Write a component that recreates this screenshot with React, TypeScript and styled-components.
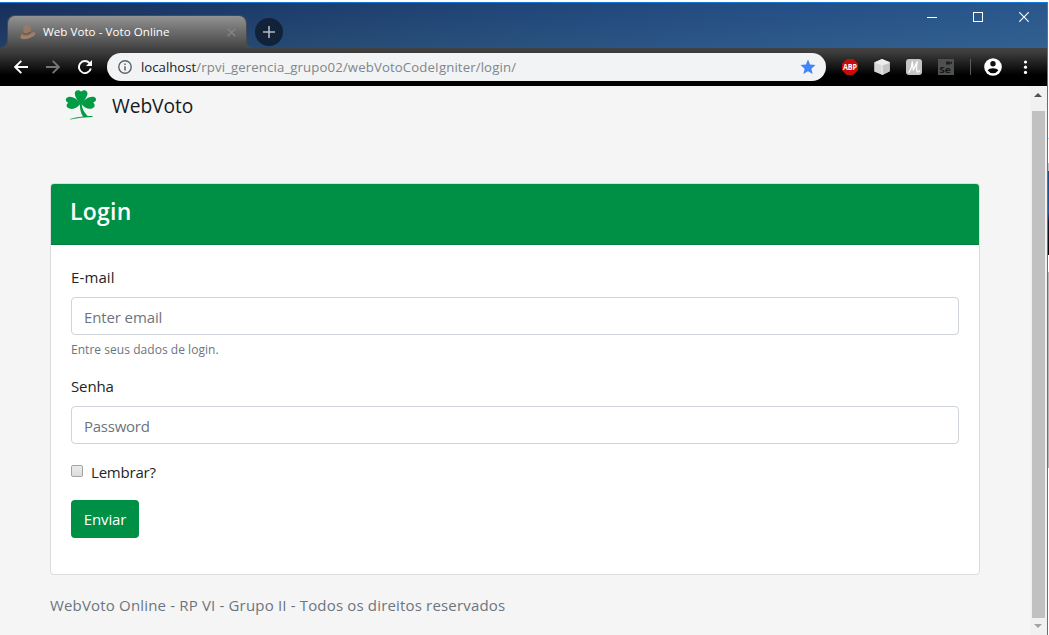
import React from "react";
import styled, { createGlobalStyle } from "styled-components";

const GREEN = "#009045";

const GlobalStyle = createGlobalStyle`
  * { box-sizing: border-box; }
  html, body { margin: 0; padding: 0; overflow: hidden; }
  body {
    font-family: "Open Sans", "Noto Sans", sans-serif;
    font-size: 15px;
    color: #212529;
    background: #fff;
  }
`;

const Desktop = styled.div`
  display: grid;
  grid-template-columns: 1047px 1px 1px;
  width: 1049px;
  height: 635px;
  padding-top: 2px;
  overflow: hidden;
`;

const BrowserWindow = styled.div`
  display: flex;
  flex-direction: column;
  min-width: 0;
  border-top: 1px solid #1478d4;
`;

const WindowEdge = styled.div`
  background: #1b83d8;
`;

const BehindWindow = styled.div`
  background: linear-gradient(
    #fff 0 136px, #b8dcf6 136px 137px, #fff 137px 161px, #b9c4cd 161px 169px,
    #1d4e86 169px, #1d5a9c 210px, #0c1c30 220px, #050708 253px,
    #fff 253px 270px, #b5b5b5 270px 466px, #fff 466px
  );
`;

const TitleBar = styled.div`
  display: flex;
  align-items: flex-end;
  height: 45px;
  padding-left: 7px;
  background:
    linear-gradient(180deg, rgba(0, 0, 0, 0.04), rgba(80, 130, 130, 0.18)),
    linear-gradient(90deg, #17305f 0%, #1f4274 35%, #25508a 72%, #2b5a92 100%);
`;

const Tab = styled.div`
  position: relative;
  display: flex;
  align-items: center;
  width: 240px;
  height: 33px;
  padding: 0 10px 0 12px;
  border: 1px solid #454950;
  border-bottom: 0;
  border-radius: 8px 8px 0 0;
  background: linear-gradient(#929292, #444);
  &::before, &::after {
    content: "";
    position: absolute;
    bottom: 0;
    width: 7px;
    height: 7px;
  }
  &::before {
    left: -8px;
    background: radial-gradient(circle at 0 0, transparent 6.5px, #484848 7px);
  }
  &::after {
    right: -8px;
    background: radial-gradient(circle at 100% 0, transparent 6.5px, #484848 7px);
  }
`;

const TabTitle = styled.span`
  flex: 1;
  margin-left: 7px;
  font-size: 11.6px;
  letter-spacing: 0.04px;
  line-height: 20px;
  color: #fff;
  white-space: nowrap;
`;

const NewTab = styled.div`
  display: grid;
  place-items: center;
  width: 28px;
  height: 28px;
  margin: 0 0 2px 8px;
  border-radius: 50%;
  background: #122238;
`;

const WindowControls = styled.div`
  display: flex;
  align-self: flex-start;
  margin-left: auto;
`;

const WindowControl = styled.div`
  display: grid;
  place-items: center;
  width: 46px;
  height: 28px;
`;

const Toolbar = styled.div`
  display: flex;
  align-items: center;
  flex: none;
  height: 38px;
  padding-left: 11px;
  background: linear-gradient(#424242, #3d3d3d 4px, #000 27px);
`;

const NavIcon = styled.span`
  display: grid;
  place-items: center;
  width: 20px;
  height: 20px;
  margin-right: 12px;
`;

const AddressBar = styled.div`
  display: flex;
  align-items: center;
  width: 719px;
  height: 28px;
  padding: 0 10px 0 11px;
  border-radius: 14px;
  background: #f1f3f4;
`;

const Url = styled.span`
  flex: 1;
  margin-left: 9px;
  font-size: 13.2px;
  letter-spacing: 0.125px;
  line-height: 20px;
  color: #80868b;
  white-space: nowrap;
`;

const UrlHost = styled.span`
  letter-spacing: 0;
  color: #202124;
`;

const Extensions = styled.div`
  display: flex;
  align-items: center;
  gap: 16px;
  margin-left: 16px;
`;

const ToolbarDivider = styled.div`
  width: 1px;
  height: 16px;
  margin: 0 13px 0 16px;
  background: #5c5c5c;
`;

const Viewport = styled.div`
  display: grid;
  grid-template-columns: 1030px 17px;
  flex: 1;
  min-height: 0;
  background: #f5f5f5;
`;

const Page = styled.main`
  padding: 0 50px;
`;

const Brand = styled.header`
  display: flex;
  align-items: center;
  height: 97px;
  padding: 0 0 59px 15px;
`;

const BrandName = styled.span`
  margin: 2px 0 0 15px;
  font-size: 19.2px;
  letter-spacing: -0.05px;
  line-height: 30px;
  color: #17191b;
`;

const Card = styled.section`
  height: 392px;
  border: 1px solid #dcdcdc;
  border-radius: 4px;
  background: #fff;
  overflow: hidden;
`;

const CardHeader = styled.div`
  height: 61px;
  padding: 12px 19px;
  border-bottom: 1px solid #007e3c;
  background: ${GREEN};
`;

const CardTitle = styled.h1`
  margin: 0;
  font-size: 23px;
  font-weight: 600;
  letter-spacing: 0.25px;
  line-height: 30px;
  color: #fff;
`;

const Form = styled.div`
  padding: 20px;
`;

const Field = styled.div`
  margin-bottom: 16px;
`;

const Label = styled.label<{ $spacing?: string }>`
  display: block;
  margin-bottom: 8px;
  line-height: 24px;
  letter-spacing: ${(p) => p.$spacing ?? "0"};
`;

const Input = styled.input<{ $spacing: string }>`
  display: block;
  width: 100%;
  height: 38px;
  padding: 2px 12px 0;
  border: 1px solid #ced4da;
  border-radius: 4px;
  background: #fff;
  font: inherit;
  letter-spacing: ${(p) => p.$spacing};
  color: #495057;
  &::placeholder { color: #6c757d; opacity: 1; }
`;

const Hint = styled.small`
  display: block;
  margin-top: 6px;
  margin-bottom: -1px;
  font-size: 12px;
  letter-spacing: 0.04px;
  line-height: 18px;
  color: #6c757d;
`;

const CheckRow = styled.div`
  display: flex;
  align-items: center;
  height: 24px;
  margin-bottom: 16px;
  letter-spacing: -0.2px;
`;

const CheckBox = styled.span`
  width: 12px;
  height: 12px;
  margin: 0 8px 2px 0;
  border: 1px solid #a3a3a3;
  border-radius: 2px;
  background: linear-gradient(#ebebeb, #dcdcdc);
`;

const Submit = styled.button`
  display: block;
  width: 68px;
  height: 38px;
  padding: 0;
  border: 0;
  border-radius: 4px;
  background: ${GREEN};
  font: inherit;
  letter-spacing: -0.1px;
  color: #fff;
`;

const Footer = styled.footer`
  margin-top: 18px;
  letter-spacing: 0.17px;
  line-height: 24px;
  color: #6c757d;
  white-space: nowrap;
`;

const Scrollbar = styled.div`
  display: flex;
  flex-direction: column;
  align-items: center;
  padding-right: 1px;
  background: #f1f1f1;
`;

const ScrollArrow = styled.div<{ $height: number; $drop: number }>`
  display: flex;
  justify-content: center;
  align-items: flex-start;
  width: 16px;
  height: ${(p) => p.$height}px;
  padding-top: ${(p) => p.$drop}px;
`;

const ScrollThumb = styled.div`
  width: 13px;
  flex: 1;
  background: #c1c1c1;
`;

const HatIcon = () => (
  <svg width="16" height="16" viewBox="0 0 16 16">
    <path d="M3.6 1.2Q5.4-.4 7 .8L9.2.7Q10.5.8 10.6 2.5L11.2 8Q14 7.4 15.4 9Q16 11 12 13Q7 16 2.2 15.2Q-.3 14.4 .5 12Q1 10 3.4 9.2Z" fill="#947a66" />
    <path d="M3.3 8.6Q6.5 10.8 11.1 7.3L11.3 8.7Q7 12 2.9 10.2Z" fill="#6c5546" />
    <path d="M1 12.8Q7 15 14.8 10" fill="none" stroke="#a98e75" strokeWidth=".9" />
  </svg>
);

const Shamrock = () => (
  <svg width="32" height="32" viewBox="0 0 32 32">
    <g fill="#009b45">
      <path d="M15.9 15.5C12.4 11.5 9.8 8 9.8 4.6C9.8 1 13.7.1 16 2.7C18.4 0 22.7 1 22.5 4.6C22.3 8 19.4 11.3 15.9 15.5Z" />
      <path d="M15.8 14.6C12.5 19 8.2 20.8 4.5 19.6C1 18.5.8 15.6 3.3 13.7C-.1 12.5.1 8.6 3.5 7.9C7.4 7.1 12 9.8 15.8 14.6Z" />
      <path d="M15.9 14.6C19.2 19 23.6 20.8 27.2 19.4C30.4 18.3 30.3 15.5 28 13.6C32 12.6 32 8.7 28.6 7.8C24.7 6.9 19.8 9.8 15.9 14.6Z" />
      <path d="M14.9 14.5H16.6C17 19.5 18.8 23.2 22.6 26.9L27.8 27L27.3 28.1Q15 28.2 5 30.5L5 30Q10.5 28.1 18 27.4C15.6 24 14.8 19.5 14.9 14.5Z" />
    </g>
  </svg>
);

const AdblockIcon = () => (
  <svg width="16" height="16" viewBox="0 0 16 16">
    <path d="M4.8 0H11.2L16 4.8V11.2L11.2 16H4.8L0 11.2V4.8Z" fill="#c70d0a" />
    <text x="1" y="11" textLength="14" lengthAdjust="spacingAndGlyphs" fontFamily="Open Sans, sans-serif" fontSize="8.2" fontWeight="700" fill="#fff">ABP</text>
  </svg>
);

const CubeIcon = () => (
  <svg width="16" height="16" viewBox="0 0 16 16">
    <path d="M8 0L15.7 3.2V12.2L8.4 16L.2 12.6V3.4Z" fill="#d6d6d6" />
    <path d="M8 0L15.7 3.2L7.6 6L.2 3.4Z" fill="#ededed" />
    <path d="M7.6 6L15.7 3.2V12.2L8.4 16Z" fill="#c4c4c4" />
    <path d="M7.9 6.2L8.3 15.4M7.8 6L15.4 3.4" stroke="#efefef" strokeWidth="1.2" />
  </svg>
);

const ScriptMIcon = () => (
  <svg width="16" height="16" viewBox="0 0 16 16">
    <rect width="16" height="16" rx="3" fill="#c5c5c5" />
    <path d="M3 13.2C5.3 10.8 5.8 6.5 6.3 2.8C6.9 6.2 6.9 8.6 7.3 11.2C8.5 8.5 9.8 5 11.2 2.8C10.5 7 10 11.5 11.3 12.8Q12.4 13.7 13.4 11.8" fill="none" stroke="#fff" strokeWidth="1.3" strokeLinecap="round" strokeLinejoin="round" />
  </svg>
);

const SeleniumIcon = () => (
  <svg width="16" height="16" viewBox="0 0 16 16">
    <rect width="16" height="16" fill="#505050" />
    <text x="1.2" y="14.4" textLength="11.5" lengthAdjust="spacingAndGlyphs" fontFamily="Open Sans, sans-serif" fontSize="9.6" fontWeight="700" fill="#151515">Se</text>
    <path d="M8 2.4H12V3.5L14 2.5V5.3L12 4.3V5.4H8Z" fill="#202020" />
  </svg>
);

const ProfileIcon = () => (
  <svg width="18" height="18" viewBox="0 0 18 18">
    <circle cx="9" cy="9" r="8.8" fill="#fff" />
    <circle cx="9" cy="5.7" r="2.7" fill="#111" />
    <path d="M3.6 12.2Q5 10.3 9 10.3T14.4 12.2Q12.3 15.2 9 15.2T3.6 12.2Z" fill="#050505" />
  </svg>
);

export default function App() {
  return (
    <>
      <GlobalStyle />
      <Desktop>
        <BrowserWindow>
          <TitleBar>
            <Tab>
              <HatIcon />
              <TabTitle>Web Voto - Voto Online</TabTitle>
              <svg width="9" height="9" viewBox="0 0 9 9">
                <path d="M.7.7L8.3 8.3M8.3.7L.7 8.3" stroke="#858585" strokeWidth="1.4" />
              </svg>
            </Tab>
            <NewTab>
              <svg width="12" height="12" viewBox="0 0 12 12">
                <path d="M6 0V12M0 6H12" stroke="#b5bac1" strokeWidth="1.6" />
              </svg>
            </NewTab>
            <WindowControls>
              <WindowControl>
                <svg width="10" height="10"><path d="M0 5.5H10" stroke="#fff" /></svg>
              </WindowControl>
              <WindowControl>
                <svg width="10" height="10"><rect x=".5" y=".5" width="9" height="9" fill="none" stroke="#fff" /></svg>
              </WindowControl>
              <WindowControl>
                <svg width="10" height="10"><path d="M.2.2L9.8 9.8M9.8.2L.2 9.8" stroke="#fff" strokeWidth="1.1" /></svg>
              </WindowControl>
            </WindowControls>
          </TitleBar>

          <Toolbar>
            <NavIcon>
              <svg width="14" height="14" viewBox="0 0 14 14">
                <path d="M14 7H1.5M7.3.8L1.2 7L7.3 13.2" fill="none" stroke="#fff" strokeWidth="1.9" />
              </svg>
            </NavIcon>
            <NavIcon>
              <svg width="14" height="14" viewBox="0 0 14 14">
                <path d="M0 7H12.5M6.7.8L12.8 7L6.7 13.2" fill="none" stroke="#757575" strokeWidth="1.9" />
              </svg>
            </NavIcon>
            <NavIcon>
              <svg width="14" height="14" viewBox="0 0 14 14">
                <path d="M12.8 8.5A6 6 0 1 1 11.4 3" fill="none" stroke="#fff" strokeWidth="1.9" />
                <path d="M14 0V6H8Z" fill="#fff" />
              </svg>
            </NavIcon>
            <AddressBar>
              <svg width="14" height="14" viewBox="0 0 14 14">
                <circle cx="7" cy="7" r="6.2" fill="none" stroke="#5f6368" strokeWidth="1.4" />
                <path d="M7 6.2V10.4M7 3.5V5" stroke="#5f6368" strokeWidth="1.5" />
              </svg>
              <Url>
                <UrlHost>localhost</UrlHost>/rpvi_gerencia_grupo02/webVotoCodeIgniter/login/
              </Url>
              <svg width="16" height="16" viewBox="0 0 16 16">
                <path d="M8 .6L10.1 5.6L15.5 6.1L11.4 9.7L12.6 15L8 12.2L3.4 15L4.6 9.7L.5 6.1L5.9 5.6Z" fill="#4285f4" />
              </svg>
            </AddressBar>
            <Extensions>
              <AdblockIcon />
              <CubeIcon />
              <ScriptMIcon />
              <SeleniumIcon />
            </Extensions>
            <ToolbarDivider />
            <ProfileIcon />
            <svg width="45" height="14" viewBox="0 0 45 14">
              <g fill="#fff">
                <circle cx="23.5" cy="2" r="1.6" />
                <circle cx="23.5" cy="7.2" r="1.6" />
                <circle cx="23.5" cy="12.4" r="1.6" />
              </g>
            </svg>
          </Toolbar>

          <Viewport>
            <Page>
              <Brand>
                <Shamrock />
                <BrandName>WebVoto</BrandName>
              </Brand>
              <Card>
                <CardHeader>
                  <CardTitle>Login</CardTitle>
                </CardHeader>
                <Form>
                  <Field>
                    <Label htmlFor="email" $spacing="0.12px">E-mail</Label>
                    <Input id="email" type="email" placeholder="Enter email" $spacing="-0.12px" />
                    <Hint>Entre seus dados de login.</Hint>
                  </Field>
                  <Field>
                    <Label htmlFor="password" $spacing="-0.12px">Senha</Label>
                    <Input id="password" type="password" placeholder="Password" $spacing="-0.25px" />
                  </Field>
                  <CheckRow>
                    <CheckBox />
                    <span>Lembrar?</span>
                  </CheckRow>
                  <Submit type="button">Enviar</Submit>
                </Form>
              </Card>
              <Footer>WebVoto Online - RP VI - Grupo II - Todos os direitos reservados</Footer>
            </Page>
            <Scrollbar>
              <ScrollArrow $height={25} $drop={7}>
                <svg width="8" height="4"><path d="M0 4L4 0L8 4Z" fill="#505050" /></svg>
              </ScrollArrow>
              <ScrollThumb />
              <ScrollArrow $height={17} $drop={6}>
                <svg width="8" height="4"><path d="M0 0L4 4L8 0Z" fill="#a3a3a3" /></svg>
              </ScrollArrow>
            </Scrollbar>
          </Viewport>
        </BrowserWindow>
        <WindowEdge />
        <BehindWindow />
      </Desktop>
    </>
  );
}
